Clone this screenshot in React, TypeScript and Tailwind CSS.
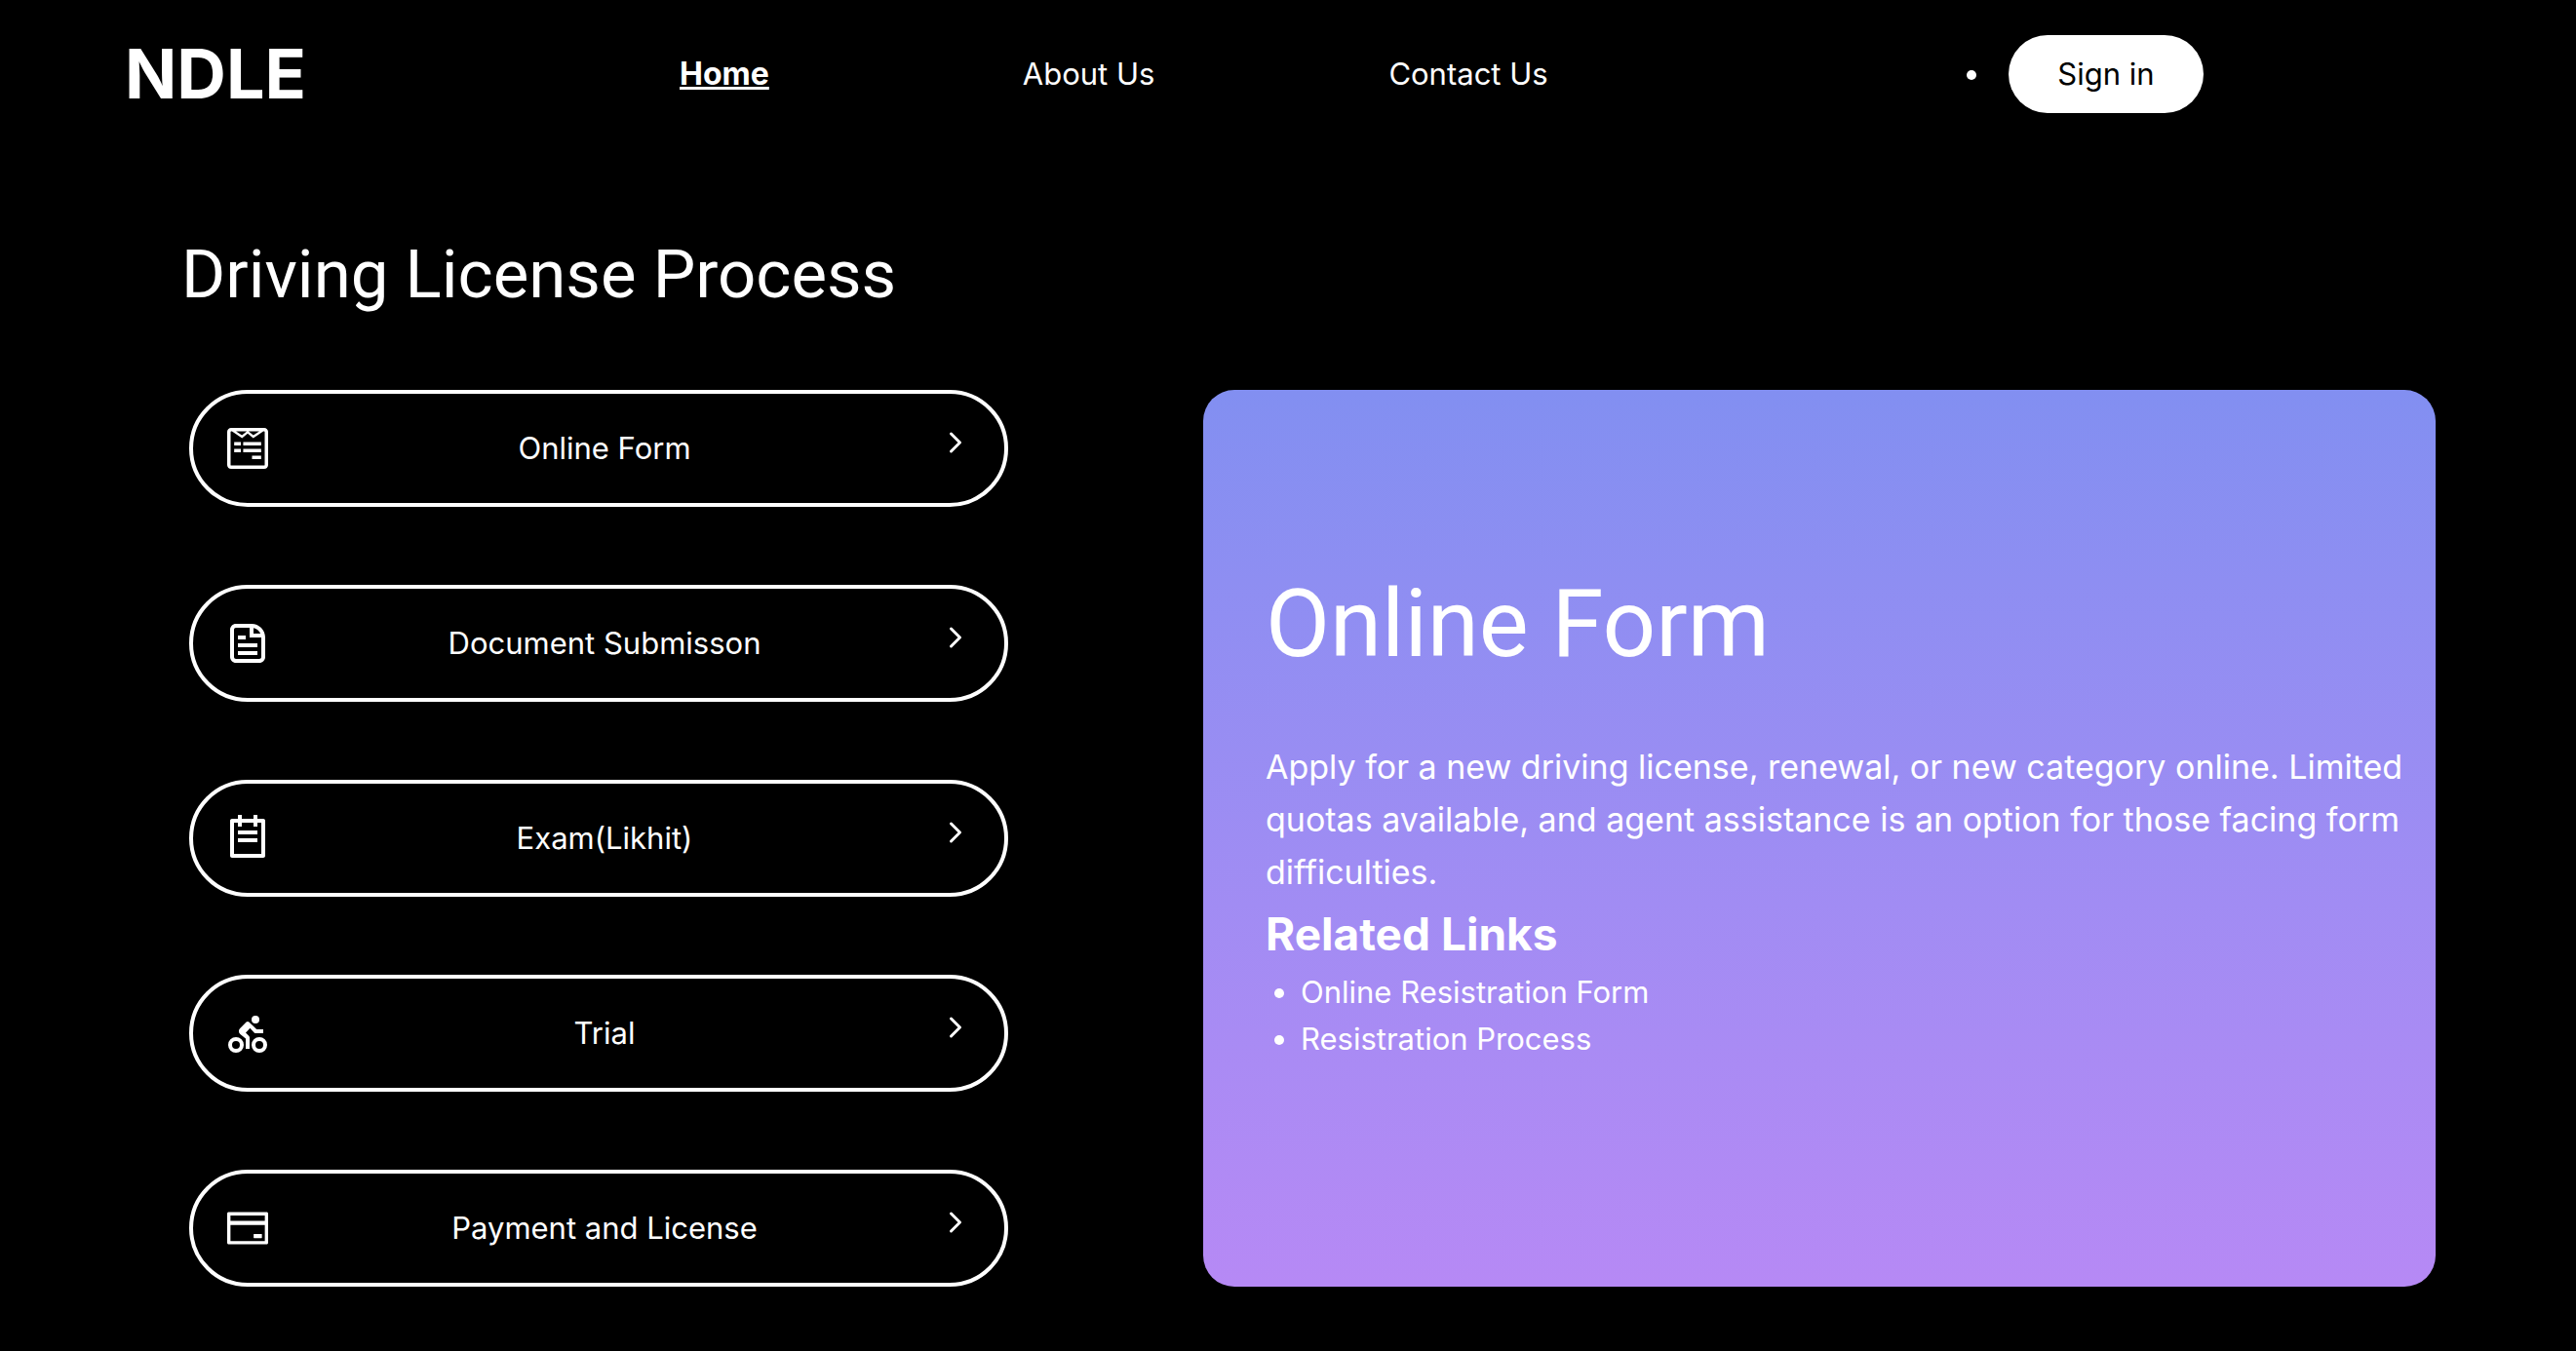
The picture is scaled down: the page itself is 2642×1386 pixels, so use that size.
import { useState, type ComponentType } from "react";
import { FaWpforms } from "react-icons/fa";
import { CgFileDocument } from "react-icons/cg";
import { AiOutlineCreditCard } from "react-icons/ai";
import { FiChevronRight } from "react-icons/fi";
import { RiTodoLine } from "react-icons/ri";

type IconProps = { className?: string };
type Step = { label: string; Icon: ComponentType<IconProps> };

function CyclistIcon({ className }: IconProps) {
  return (
    <svg viewBox="0 0 24 24" fill="currentColor" aria-hidden="true" className={className}>
      <circle cx="16" cy="5" r="2" />
      <circle cx="6" cy="18" r="3" fill="none" stroke="currentColor" strokeWidth="2" />
      <circle cx="18" cy="18" r="3" fill="none" stroke="currentColor" strokeWidth="2" />
      <path d="M12.7 6.3a1 1 0 0 0-1.4 0L8.1 9.5a2 2 0 0 0 .1 3L11 14.8V20h2v-5.6a1.5 1.5 0 0 0-.5-1.2L11 11.8l2.2-2.4 2.2 2.3a1 1 0 0 0 .7.3H20v-2h-3.4z" />
    </svg>
  );
}

const steps: Step[] = [
  { label: "Online Form", Icon: FaWpforms },
  { label: "Document Submisson", Icon: CgFileDocument },
  { label: "Exam(Likhit)", Icon: RiTodoLine },
  { label: "Trial", Icon: CyclistIcon },
  { label: "Payment and License", Icon: AiOutlineCreditCard },
];

function Header() {
  return (
    <header className="flex items-center pt-9 pl-32">
      <a href="#" className="w-[569px] text-[70px] leading-20 font-bold">
        NDLE
      </a>
      <nav className="grow">
        <ul className="flex items-center text-[31px] leading-12">
          <li className="mr-65">
            <a href="#home" className="text-[32px] font-bold underline">
              Home
            </a>
          </li>
          <li className="mr-60">
            <a href="#about">About Us</a>
          </li>
          <li>
            <a href="#contact">Contact Us</a>
          </li>
        </ul>
      </nav>
      <ul className="mr-[382px] list-disc text-[31px] leading-12">
        <li>
          <button type="button" className="ml-4 h-20 w-50 rounded-full bg-white text-black">
            Sign in
          </button>
        </li>
      </ul>
    </header>
  );
}

function StepButton({ step, onSelect }: { step: Step; onSelect: () => void }) {
  const { label, Icon } = step;
  return (
    <button
      type="button"
      onClick={onSelect}
      className="flex w-full items-center justify-between rounded-full border-4 border-white p-8"
    >
      <Icon className="size-12" />
      <span className="text-[31px] leading-12">{label}</span>
      <FiChevronRight className="size-9 self-start" />
    </button>
  );
}

function Details({ title }: { title: string }) {
  return (
    <section className="grow basis-0 rounded-[32px] bg-linear-to-b from-[#828ff1] to-[#b689f5] pt-[180px] pr-6 pl-16">
      <h2 className='font-["Roboto",sans-serif] text-[96px] leading-30'>{title}</h2>
      <p className="mt-15 text-[34px] leading-[54px]">
        Apply for a new driving license, renewal, or new category online. Limited quotas available,
        and agent assistance is an option for those facing form difficulties.
      </p>
      <h3 className="text-[46px] leading-18 font-bold">Related Links</h3>
      <ul className="list-disc pl-9 text-[31px] leading-12">
        <li>
          <a href="#registration-form">Online Resistration Form</a>
        </li>
        <li>
          <a href="#registration-process">Resistration Process</a>
        </li>
      </ul>
    </section>
  );
}

export default function App() {
  const [active, setActive] = useState(0);
  return (
    <div className='min-h-screen bg-black font-["Inter",sans-serif] text-white'>
      <Header />
      <main className="pt-28 pr-36 pl-[194px]">
        <h1 className='-ml-2 font-["Roboto",sans-serif] text-[69px] leading-27'>
          Driving License Process
        </h1>
        <div className="mt-16 flex gap-50">
          <div className="flex w-[840px] flex-col gap-20">
            {steps.map((step, i) => (
              <StepButton key={step.label} step={step} onSelect={() => setActive(i)} />
            ))}
          </div>
          <Details title={steps[active].label} />
        </div>
      </main>
    </div>
  );
}
